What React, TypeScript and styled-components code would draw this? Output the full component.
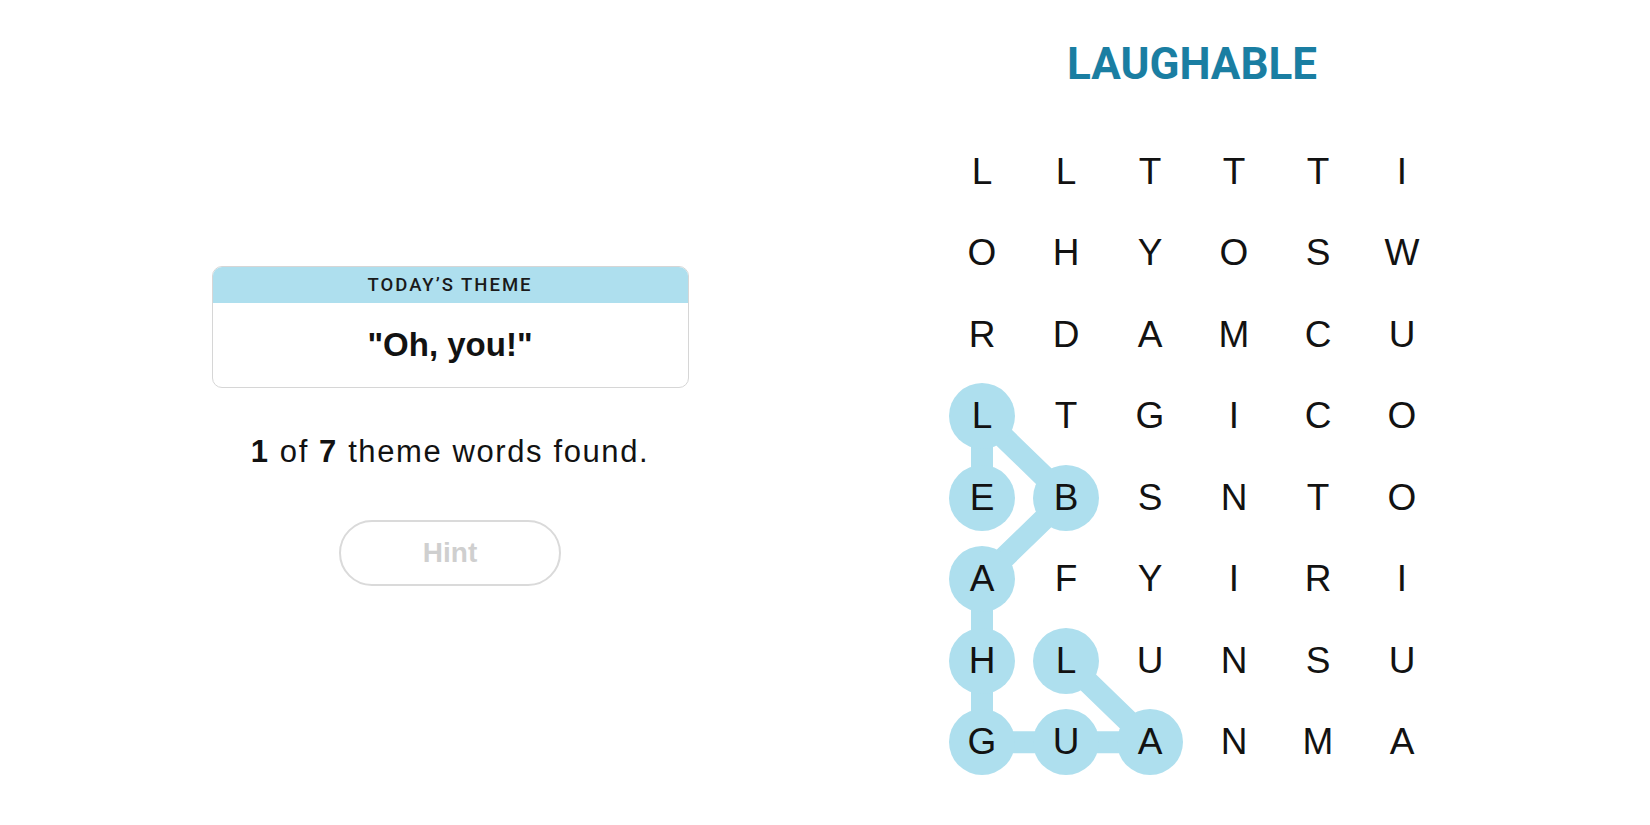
import styled, { createGlobalStyle } from "styled-components";

const GlobalStyle = createGlobalStyle`
  body {
    margin: 0;
    background: #ffffff;
    color: #121212;
    font-family: "Liberation Sans", Arial, sans-serif;
  }
`;

const CELL_W = 84;
const CELL_H = 81.5;
const THEME_BLUE = "#aedfee";

const rows = [
  "LLTTTI",
  "OHYOSW",
  "RDAMCU",
  "LTGICO",
  "EBSNTO",
  "AFYIRI",
  "HLUNSU",
  "GUANMA",
];

// path of the found word, as [row, col]
const foundPath: [number, number][] = [
  [6, 1],
  [7, 2],
  [7, 1],
  [7, 0],
  [6, 0],
  [5, 0],
  [4, 1],
  [3, 0],
  [4, 0],
];

const isFound = (r: number, c: number) =>
  foundPath.some(([fr, fc]) => fr === r && fc === c);

const Page = styled.div`
  display: flex;
  width: 1650px;
  height: 825px;
`;

const LeftPane = styled.section`
  width: 900px;
  display: flex;
  flex-direction: column;
  align-items: center;
  padding-top: 266px;
  box-sizing: border-box;
`;

const ThemeCard = styled.div`
  width: 475px;
  border: 1px solid #d6d6d6;
  border-radius: 10px;
  overflow: hidden;
`;

const CardHeader = styled.div`
  height: 36px;
  display: flex;
  align-items: center;
  justify-content: center;
  background: ${THEME_BLUE};
  font-family: Roboto, "Liberation Sans", sans-serif;
  font-weight: 500;
  font-size: 18.5px;
  letter-spacing: 2px;
  color: #1a1a1a;
`;

const CardBody = styled.div`
  height: 84px;
  display: flex;
  align-items: center;
  justify-content: center;
  font-weight: 700;
  font-size: 33px;
  color: #121212;
`;

const FoundText = styled.p`
  margin: 46px 0 0;
  font-size: 31px;
  line-height: 1.15;
  letter-spacing: 1.6px;
  color: #121212;

  b {
    font-weight: 700;
  }
`;

const HintButton = styled.button`
  margin-top: 50px;
  width: 222px;
  height: 66px;
  border: 2px solid #dadada;
  border-radius: 33px;
  background: #ffffff;
  font-family: "Liberation Sans", Arial, sans-serif;
  font-weight: 700;
  font-size: 28px;
  color: #cfcfcf;
`;

const RightPane = styled.section`
  width: 584px;
  display: flex;
  flex-direction: column;
  align-items: center;
  padding-top: 42px;
  box-sizing: border-box;
`;

const Spangram = styled.h1`
  margin: 0;
  font-family: Roboto, "Liberation Sans", sans-serif;
  font-weight: 700;
  font-size: 44px;
  line-height: 1;
  color: #1a7ea2;
`;

const Board = styled.div`
  position: relative;
  margin-top: 45px;
  display: grid;
  grid-template-columns: repeat(6, ${CELL_W}px);
  grid-auto-rows: ${CELL_H}px;
`;

const Links = styled.svg`
  position: absolute;
  left: 0;
  top: 0;
  z-index: 0;
`;

const Cell = styled.div`
  position: relative;
  z-index: 1;
  display: flex;
  align-items: center;
  justify-content: center;
`;

const Letter = styled.span<{ $found: boolean }>`
  width: 66px;
  height: 66px;
  border-radius: 50%;
  display: flex;
  align-items: center;
  justify-content: center;
  background: ${(p) => (p.$found ? THEME_BLUE : "transparent")};
  font-size: 37px;
  color: #121212;
`;

const cx = (c: number) => CELL_W / 2 + c * CELL_W;
const cy = (r: number) => CELL_H / 2 + r * CELL_H;

const App = () => {
  const points = foundPath.map(([r, c]) => `${cx(c)},${cy(r)}`).join(" ");
  return (
    <>
      <GlobalStyle />
      <Page>
        <LeftPane>
          <ThemeCard>
            <CardHeader>TODAY’S THEME</CardHeader>
            <CardBody>"Oh, you!"</CardBody>
          </ThemeCard>
          <FoundText>
            <b>1</b> of <b>7</b> theme words found.
          </FoundText>
          <HintButton disabled>Hint</HintButton>
        </LeftPane>
        <RightPane>
          <Spangram>LAUGHABLE</Spangram>
          <Board>
            <Links width={CELL_W * 6} height={CELL_H * 8}>
              <polyline
                points={points}
                fill="none"
                stroke={THEME_BLUE}
                strokeWidth={22}
                strokeLinejoin="round"
              />
            </Links>
            {rows.map((row, r) =>
              row.split("").map((ch, c) => (
                <Cell key={`${r}-${c}`}>
                  <Letter $found={isFound(r, c)}>{ch}</Letter>
                </Cell>
              ))
            )}
          </Board>
        </RightPane>
      </Page>
    </>
  );
};

export default App;
